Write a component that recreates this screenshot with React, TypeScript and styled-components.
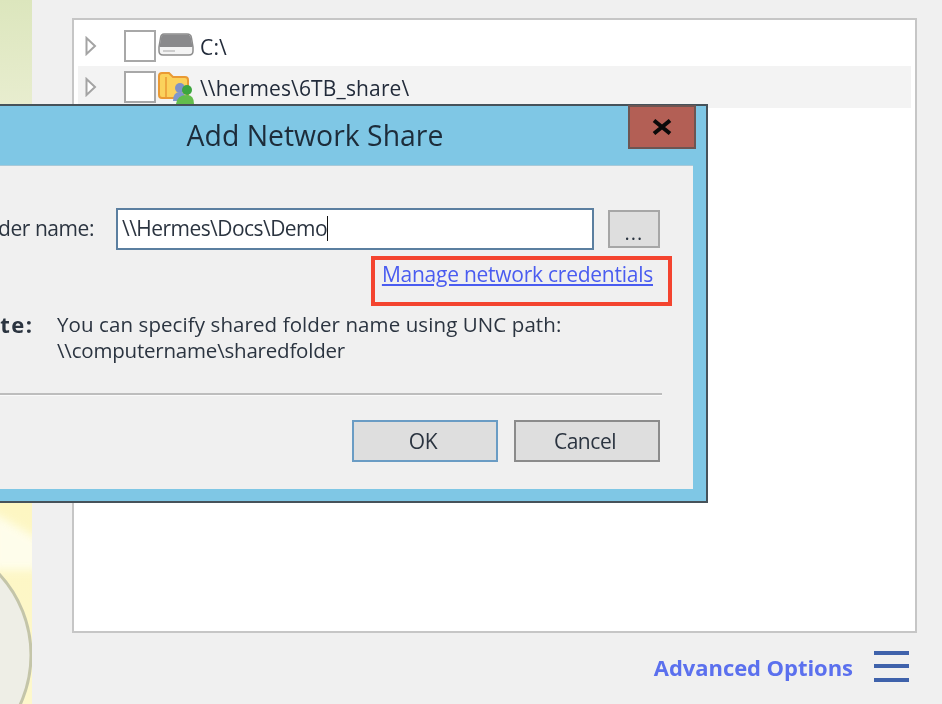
import React from 'react';
import styled, { createGlobalStyle } from 'styled-components';

const Global = createGlobalStyle`
  html, body { margin: 0; padding: 0; background: #f0f0f0; }
  body { width: 942px; height: 704px; overflow: hidden; }
  #root { width: 942px; height: 704px; }
`;

const Page = styled.div`
  position: relative;
  display: flex;
  width: 942px;
  height: 704px;
  overflow: hidden;
  background: #f0f0f0;
  font-family: "Open Sans", "Noto Sans", sans-serif;
  color: #2b3440;
  filter: blur(0.5px);
`;

const Wallpaper = styled.div`
  position: relative;
  width: 32px;
  flex: none;
  overflow: hidden;
  background: linear-gradient(180deg, #dce6bd 0%, #e8edcf 15%, #f6f2c8 50%, #fdf6c2 72%, #fdf8cc 100%);
`;

const Main = styled.div`
  flex: 1;
  display: flex;
  flex-direction: column;
  padding: 18px 25px 0 40px;
`;

const TreePanel = styled.div`
  height: 615px;
  box-sizing: border-box;
  background: #fff;
  border: 2px solid #c6c6c6;
  padding: 6px 4px 0 4px;
`;

const TreeRow = styled.div<{ $alt?: boolean }>`
  display: flex;
  align-items: center;
  height: ${p => (p.$alt ? 42 : 40)}px;
  background: ${p => (p.$alt ? '#f3f3f3' : 'transparent')};
  padding-left: 7px;
`;

const CheckBox = styled.span`
  width: 32px;
  height: 32px;
  box-sizing: border-box;
  flex: none;
  background: #fff;
  border: 2px solid #a8a8a8;
  margin-left: 27px;
  margin-right: 2px;
`;

const RowLabel = styled.span`
  font-size: 21px;
  letter-spacing: 0.15px;
  margin-left: 6px;
  padding-top: 2px;
  color: #222b3a;
`;

const Footer = styled.div`
  display: flex;
  align-items: center;
  justify-content: flex-end;
  gap: 21px;
  height: 70px;
  padding-right: 8px;
`;

const AdvancedLink = styled.span`
  font-size: 22px;
  font-weight: 700;
  letter-spacing: -0.05px;
  margin-top: -2px;
  color: #5b70ee;
`;

const Burger = styled.span`
  display: flex;
  flex-direction: column;
  justify-content: space-between;
  width: 35px;
  height: 31px;
  margin-top: -4px;
`;

const BurgerBar = styled.span`
  height: 4px;
  background: #3f62ab;
`;

const Dialog = styled.div`
  position: absolute;
  left: -92px;
  top: 104px;
  width: 800px;
  height: 399px;
  box-sizing: border-box;
  background: #7fc7e5;
  border: 2px solid #46525a;
  display: flex;
  flex-direction: column;
`;

const TitleBar = styled.div`
  position: relative;
  flex: none;
  height: 59px;
  box-sizing: border-box;
  display: flex;
  align-items: center;
  justify-content: center;
  padding: 0 0 2px 14px;
  font-size: 28.400px;
  color: #1d2c3a;
`;

const CloseButton = styled.span`
  position: absolute;
  top: -1px;
  right: 10px;
  width: 68px;
  height: 44px;
  box-sizing: border-box;
  display: flex;
  align-items: center;
  justify-content: center;
  background: #b35f55;
  border: 2px solid #6d5552;
`;

const Content = styled.div`
  flex: none;
  height: 324px;
  box-sizing: border-box;
  margin: 0 13px 0 14px;
  background: #f0f0f0;
  padding: 42px 33px 0 0;
  border-top: 1px solid #a9c9d8;
  font-size: 21px;
  letter-spacing: -0.45px;
`;

const FieldRow = styled.div`
  display: flex;
  align-items: center;
  justify-content: flex-end;
`;

const FieldLabel = styled.span`
  margin: -2px 22px 0 0;
  white-space: nowrap;
`;

const PathInput = styled.div`
  width: 478px;
  height: 42px;
  flex: none;
  box-sizing: border-box;
  background: #fff;
  border: 2px solid #5b7fa0;
  display: flex;
  align-items: center;
  padding: 0 0 2px 4px;
  margin-right: 14px;
  letter-spacing: -0.55px;
  white-space: nowrap;
`;

const Caret = styled.span`
  width: 1px;
  height: 25px;
  background: #111;
`;

const SmallButton = styled.span`
  width: 52px;
  height: 38px;
  flex: none;
  box-sizing: border-box;
  background: #dedede;
  border: 2px solid #a6a6a6;
  display: flex;
  align-items: center;
  justify-content: center;
  padding-top: 6px;
  font-size: 20px;
  letter-spacing: 1px;
`;

const LinkRow = styled.div`
  display: flex;
  justify-content: flex-end;
  margin-top: 6px;
  margin-right: -12px;
`;

const Highlight = styled.span`
  width: 301px;
  height: 50px;
  box-sizing: border-box;
  border: 4px solid #f4442f;
  display: flex;
  justify-content: flex-end;
  padding: 0 15px 0 0;
`;

const CredLink = styled.span`
  font-size: 21px;
  line-height: 28px;
  letter-spacing: -0.25px;
  color: #4a5cf0;
  text-decoration: underline;
  white-space: nowrap;
`;

const NoteRow = styled.div`
  display: flex;
  margin-top: 5px;
  line-height: 26px;
  font-size: 20.5px;
`;

const NoteLabel = styled.span`
  width: 133px;
  flex: none;
  text-align: right;
  padding-right: 23.5px;
  box-sizing: border-box;
  font-size: 22px;
  font-weight: 700;
  letter-spacing: 1.5px;
  white-space: nowrap;
`;

const NoteText = styled.div`
  white-space: nowrap;
`;

const NoteLine = styled.div<{ $tight?: boolean }>`
  letter-spacing: ${p => (p.$tight ? '-0.2px' : '0.09px')};
`;

const Separator = styled.div`
  height: 2px;
  margin-top: 30px;
  margin-right: -2px;
  background: #bdbdbd;
  border-bottom: 1px solid #fafafa;
`;

const ButtonRow = styled.div`
  display: flex;
  justify-content: flex-end;
  gap: 16px;
  margin-top: 24px;
`;

const DialogButton = styled.span<{ $primary?: boolean }>`
  width: 146px;
  height: 42px;
  box-sizing: border-box;
  background: #dedede;
  border: 2px solid ${p => (p.$primary ? '#6a9cc4' : '#8b8b8b')};
  display: flex;
  align-items: center;
  justify-content: center;
  padding-right: 4px;
  font-size: 21px;
`;

const Arrow = () => (
  <svg width="12" height="20" viewBox="0 0 12 20" style={{ flex: 'none' }}>
    <path d="M1.5 2 L10 10 L1.5 18 Z" fill="#fff" stroke="#a4a4a4" strokeWidth="2" />
  </svg>
);

const DriveIcon = () => (
  <svg width="36" height="26" viewBox="0 0 36 26" style={{ flex: 'none' }}>
    <path d="M6 1 H29 Q33 1 33.500 5 L35 14 V18 Q35 22 31 22 H5 Q1 22 1 18 V14 L2.500 5 Q3 1 6 1 Z" fill="#f4f4f4" stroke="#8d8d8d" strokeWidth="1.500" />
    <path d="M6 1.500 H29 Q32 1.500 33 5 L34.500 14 H1.500 L3 5 Q3.500 1.500 6 1.500 Z" fill="#8a8a8c" />
    <path d="M5 18 H17" stroke="#c0c0c0" strokeWidth="1.500" />
  </svg>
);

const ShareIcon = () => (
  <svg width="36" height="34" viewBox="0 0 36 34" style={{ flex: 'none' }}>
    <path d="M1 6 Q1 3 4 3 H11 L15 7 H27 Q30 7 30 10 V25 Q30 28 27 28 H4 Q1 28 1 25 Z" fill="#fbd25c" stroke="#ea9a34" strokeWidth="2" />
    <path d="M8 7 V27" stroke="#ea9a34" strokeWidth="1.500" />
    <circle cx="22" cy="18" r="5" fill="#7f92c8" />
    <path d="M15 31 Q15 22 22 22 Q26 22 27 26 L24 31 Z" fill="#8098cc" />
    <circle cx="29" cy="20" r="5" fill="#3da63f" />
    <path d="M18 34 Q19 25 29 25 Q36 25 36 34 Z" fill="#63bd4c" />
  </svg>
);

const CloseGlyph = () => (
  <svg width="20" height="16" viewBox="0 0 20 16">
    <path d="M2 1.500 L18 14.500 M18 1.500 L2 14.500" stroke="#0a0a0a" strokeWidth="4" />
  </svg>
);

const WallpaperArt = () => (
  <svg width="32" height="704" viewBox="0 0 32 704">
    <defs>
      <filter id="soft" x="-50%" y="-50%" width="200%" height="200%">
        <feGaussianBlur stdDeviation="5" />
      </filter>
    </defs>
    <path d="M-8 512 L40 540 V570 L-8 570 Z" fill="#fffef0" opacity=".9" filter="url(#soft)" />
    <circle cx="-88" cy="655" r="119" fill="#eeeee6" stroke="#c4c5a9" strokeWidth="3" />
  </svg>
);

export default function App() {
  return (
    <Page>
      <Global />
      <Wallpaper>
        <WallpaperArt />
      </Wallpaper>
      <Main>
        <TreePanel>
          <TreeRow>
            <Arrow />
            <CheckBox />
            <DriveIcon />
            <RowLabel>C:\</RowLabel>
          </TreeRow>
          <TreeRow $alt>
            <Arrow />
            <CheckBox />
            <ShareIcon />
            <RowLabel>\\hermes\6TB_share\</RowLabel>
          </TreeRow>
        </TreePanel>
        <Footer>
          <AdvancedLink>Advanced Options</AdvancedLink>
          <Burger>
            <BurgerBar />
            <BurgerBar />
            <BurgerBar />
          </Burger>
        </Footer>
      </Main>
      <Dialog>
        <TitleBar>
          Add Network Share
          <CloseButton>
            <CloseGlyph />
          </CloseButton>
        </TitleBar>
        <Content>
          <FieldRow>
            <FieldLabel>Shared folder name:</FieldLabel>
            <PathInput>
              \\Hermes\Docs\Demo
              <Caret />
            </PathInput>
            <SmallButton>...</SmallButton>
          </FieldRow>
          <LinkRow>
            <Highlight>
              <CredLink>Manage network credentials</CredLink>
            </Highlight>
          </LinkRow>
          <NoteRow>
            <NoteLabel>Note:</NoteLabel>
            <NoteText>
              <NoteLine>You can specify shared folder name using UNC path:</NoteLine>
              <NoteLine $tight>\\computername\sharedfolder</NoteLine>
            </NoteText>
          </NoteRow>
          <Separator />
          <ButtonRow>
            <DialogButton $primary>OK</DialogButton>
            <DialogButton>Cancel</DialogButton>
          </ButtonRow>
        </Content>
      </Dialog>
    </Page>
  );
}
